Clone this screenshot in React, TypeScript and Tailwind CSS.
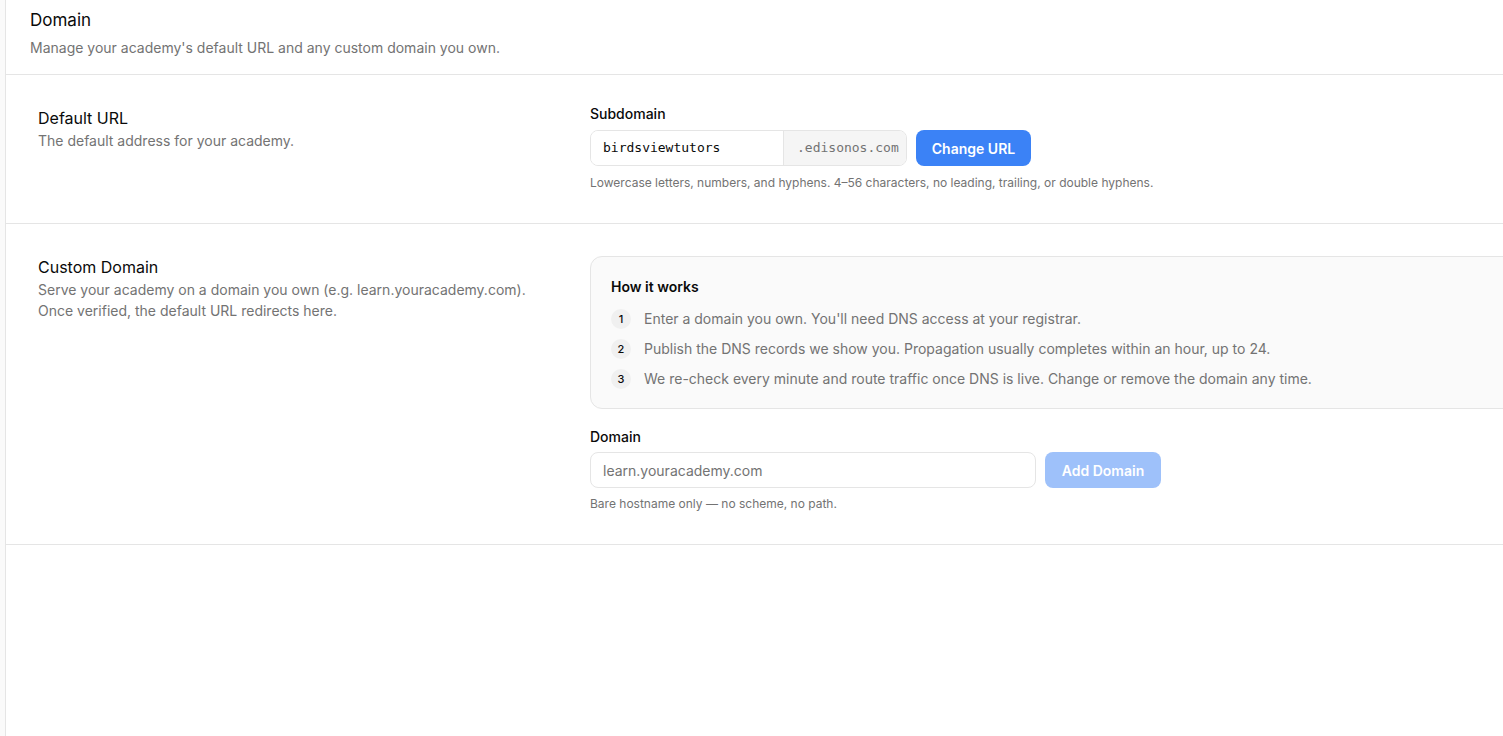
import React from "react";

const font = { fontFamily: "Inter, 'Noto Sans', sans-serif" };

export default function App() {
  return (
    <div className="w-full h-screen overflow-hidden bg-[#fafafa] pl-[5px] font-['Inter','Noto_Sans',sans-serif]" style={font}>
      <div className="w-[1580px] h-full bg-white border-l border-[#e5e5e5]">
        {/* Header */}
        <div className="px-6 pt-2 pb-[16px] border-b border-[#e5e5e5]">
          <h1 className="text-[17px] leading-6 text-[#0a0a0a] font-normal">Domain</h1>
          <p className="mt-[6px] text-[14px] leading-5 text-[#737373]">
            Manage your academy's default URL and any custom domain you own.
          </p>
        </div>

        {/* Default URL */}
        <div className="grid grid-cols-[520px_1fr] gap-8 px-8 pt-[29px] pb-[32px] border-b border-[#e5e5e5]">
          <div className="mt-[2px]">
            <h2 className="text-[16px] leading-6 text-[#0a0a0a]">Default URL</h2>
            <p className="text-[14px] leading-[21px] text-[#737373]">The default address for your academy.</p>
          </div>
          <div>
            <label className="block text-[14px] leading-5 font-medium text-[#0a0a0a]">Subdomain</label>
            <div className="mt-[6px] flex items-center gap-[9px]">
              <div className="flex h-9 w-[317px] rounded-lg border border-[#e5e5e5] overflow-hidden">
                <div className="w-[192px] flex items-center pl-3 bg-white text-[13px] text-[#0a0a0a] font-['DejaVu_Sans_Mono',monospace]">
                  birdsviewtutors
                </div>
                <div className="flex-1 flex items-center pl-[13px] bg-[#f5f5f5] border-l border-[#e5e5e5] text-[13px] text-[#737373] font-['DejaVu_Sans_Mono',monospace]">
                  .edisonos.com
                </div>
              </div>
              <button className="h-9 w-[115px] rounded-lg bg-[#3b82f6] text-white text-[14px] font-semibold">
                Change URL
              </button>
            </div>
            <p className="mt-[9px] text-[12px] leading-4 text-[#737373]">
              Lowercase letters, numbers, and hyphens. 4–56 characters, no leading, trailing, or double hyphens.
            </p>
          </div>
        </div>

        {/* Custom Domain */}
        <div className="grid grid-cols-[520px_1fr] gap-8 px-8 pt-[31px] pb-[32px] border-b border-[#e5e5e5]">
          <div>
            <h2 className="text-[16px] leading-6 text-[#0a0a0a]">Custom Domain</h2>
            <p className="text-[14px] leading-[21px] text-[#737373]">
              Serve your academy on a domain you own (e.g. learn.youracademy.com).
              <br />
              Once verified, the default URL redirects here.
            </p>
          </div>
          <div className="mt-[1px]">
            <div className="rounded-xl border border-[#e5e5e5] bg-[#fafafa] px-5 pt-[20px] pb-[18px]">
              <h3 className="text-[14px] leading-5 font-semibold text-[#0a0a0a]">How it works</h3>
              <ol className="mt-[11px] flex flex-col gap-2">
                {[
                  "Enter a domain you own. You'll need DNS access at your registrar.",
                  "Publish the DNS records we show you. Propagation usually completes within an hour, up to 24.",
                  "We re-check every minute and route traffic once DNS is live. Change or remove the domain any time.",
                ].map((t, i) => (
                  <li key={i} className="flex items-center gap-[13px] h-[22px]">
                    <span className="w-5 h-5 rounded-full bg-[#f0f0f0] flex items-center justify-center text-[11px] font-medium text-[#0a0a0a]">
                      {i + 1}
                    </span>
                    <span className="text-[14px] leading-5 text-[#737373]">{t}</span>
                  </li>
                ))}
              </ol>
            </div>
            <label className="mt-[18px] block text-[14px] leading-5 font-medium text-[#0a0a0a]">Domain</label>
            <div className="mt-[5px] flex items-center gap-[9px]">
              <input
                className="h-9 w-[446px] rounded-lg border border-[#e5e5e5] bg-white px-3 text-[14px] text-[#0a0a0a] placeholder:text-[#737373] outline-none"
                placeholder="learn.youracademy.com"
              />
              <button disabled className="h-9 w-[116px] rounded-lg bg-[#9ec1fa] text-white text-[14px] font-semibold">
                Add Domain
              </button>
            </div>
            <p className="mt-[8px] text-[12px] leading-4 text-[#737373]">Bare hostname only — no scheme, no path.</p>
          </div>
        </div>
      </div>
    </div>
  );
}
